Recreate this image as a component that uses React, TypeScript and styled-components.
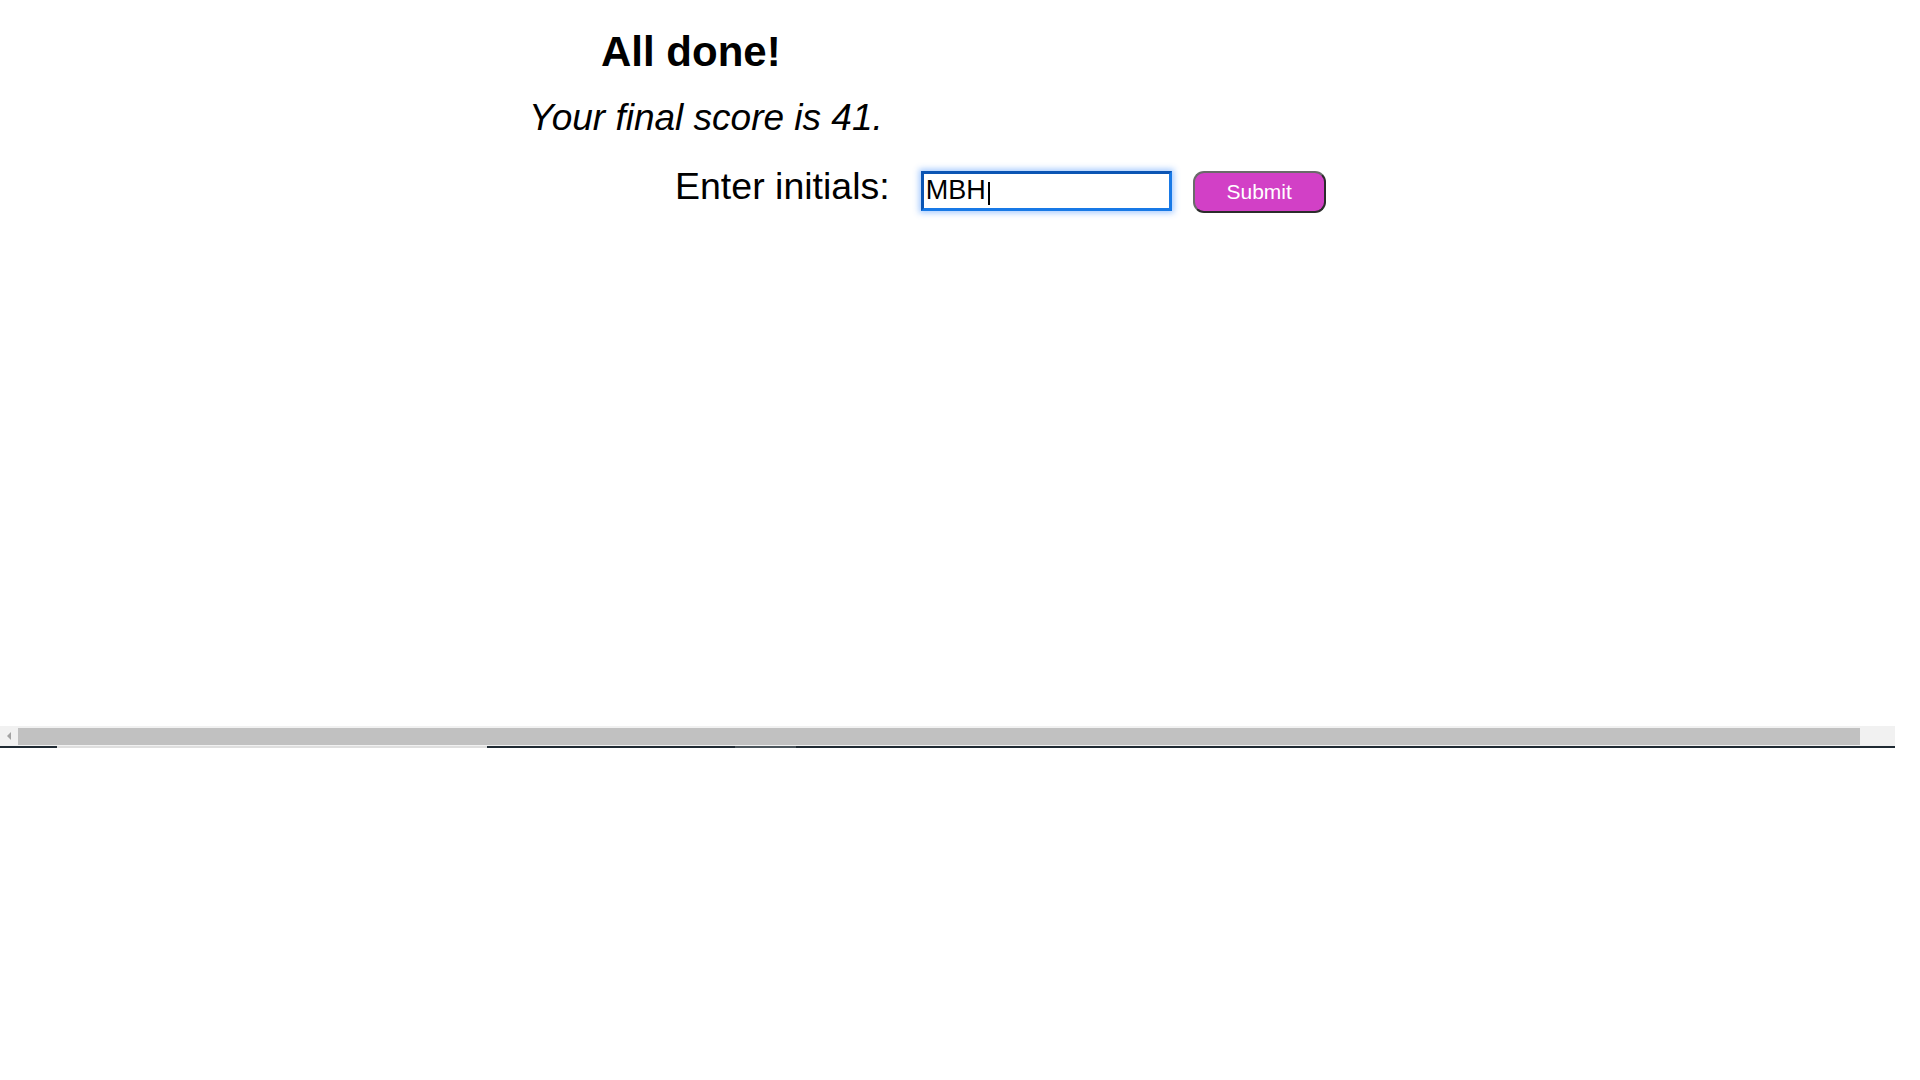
import React from "react";
import styled, { createGlobalStyle } from "styled-components";

const GlobalStyle = createGlobalStyle`
  html, body {
    margin: 0;
    padding: 0;
    background: #ffffff;
  }
  body {
    font-family: "Liberation Sans", Arial, sans-serif;
    color: #000000;
  }
`;

const Frame = styled.div`
  width: 1895px;
  display: flex;
  flex-direction: column;
`;

const Viewport = styled.main`
  height: 726px;
  overflow: hidden;
  box-sizing: border-box;
  padding-left: 529px;
  display: flex;
  flex-direction: column;
  align-items: flex-start;
`;

const Title = styled.h1`
  margin: 28px 0 0 72px;
  font-size: 42px;
  line-height: 48px;
  font-weight: 700;
`;

const Score = styled.p`
  margin: 21px 0 0 0;
  font-size: 37px;
  line-height: 42px;
  font-style: italic;
`;

const Form = styled.form`
  margin: 26px 0 0 146px;
  display: flex;
  align-items: flex-start;
`;

const Label = styled.label`
  font-size: 37.5px;
  line-height: 43px;
`;

const Field = styled.div`
  position: relative;
  margin: 6px 0 0 31px;
`;

const Input = styled.input`
  display: block;
  width: 251px;
  height: 40px;
  box-sizing: border-box;
  padding: 0 2px 2px;
  border: 3px solid;
  border-color: #0b55b4 #1879e6 #1879e6 #0b55b4;
  outline: none;
  box-shadow: 0 0 6px 2px rgba(60, 140, 255, 0.45);
  font-family: "Liberation Sans", Arial, sans-serif;
  font-size: 27px;
  color: #000000;
  caret-color: transparent;
  background: #ffffff;
`;

const Caret = styled.span`
  position: absolute;
  left: 67px;
  top: 11px;
  width: 2px;
  height: 23px;
  background: #000000;
  pointer-events: none;
`;

const SubmitButton = styled.button`
  margin: 6px 0 0 21px;
  width: 133px;
  height: 42px;
  box-sizing: border-box;
  padding: 0;
  border: 2px solid;
  border-color: #6a6a6a #2c2c2c #2c2c2c #6a6a6a;
  border-radius: 11px;
  background: #d240c6;
  color: #ffffff;
  font-family: "Liberation Sans", Arial, sans-serif;
  font-size: 21px;
  cursor: pointer;
`;

const ScrollTrack = styled.div`
  height: 20px;
  background: #f1f1f1;
  display: flex;
  align-items: flex-start;
`;

const ArrowCell = styled.div`
  width: 18px;
  height: 20px;
  display: flex;
  align-items: center;
  justify-content: center;
`;

const LeftArrow = styled.span`
  width: 0;
  height: 0;
  border-top: 4px solid transparent;
  border-bottom: 4px solid transparent;
  border-right: 4px solid #a3a3a3;
`;

const Thumb = styled.div`
  margin-top: 2px;
  width: 1842px;
  height: 17px;
  background: #c1c1c1;
`;

const Strip = styled.div`
  height: 2px;
  display: flex;
`;

const Segment = styled.span<{ $color: string; $width: number }>`
  width: ${(p) => p.$width}px;
  height: 2px;
  background: ${(p) => p.$color};
`;

const segments: { width: number; color: string }[] = [
  { width: 57, color: "#1f2a33" },
  { width: 430, color: "#dedede" },
  { width: 248, color: "#1f2a33" },
  { width: 61, color: "#4b555c" },
  { width: 1099, color: "#1f2a33" },
];

export default function App() {
  return (
    <>
      <GlobalStyle />
      <Frame>
        <Viewport>
          <Title>All done!</Title>
          <Score>Your final score is 41.</Score>
          <Form onSubmit={(e) => e.preventDefault()}>
            <Label htmlFor="initials">Enter initials:</Label>
            <Field>
              <Input id="initials" type="text" defaultValue="MBH" />
              <Caret />
            </Field>
            <SubmitButton type="submit">Submit</SubmitButton>
          </Form>
        </Viewport>
        <ScrollTrack>
          <ArrowCell>
            <LeftArrow />
          </ArrowCell>
          <Thumb />
        </ScrollTrack>
        <Strip>
          {segments.map((s, i) => (
            <Segment key={i} $color={s.color} $width={s.width} />
          ))}
        </Strip>
      </Frame>
    </>
  );
}
